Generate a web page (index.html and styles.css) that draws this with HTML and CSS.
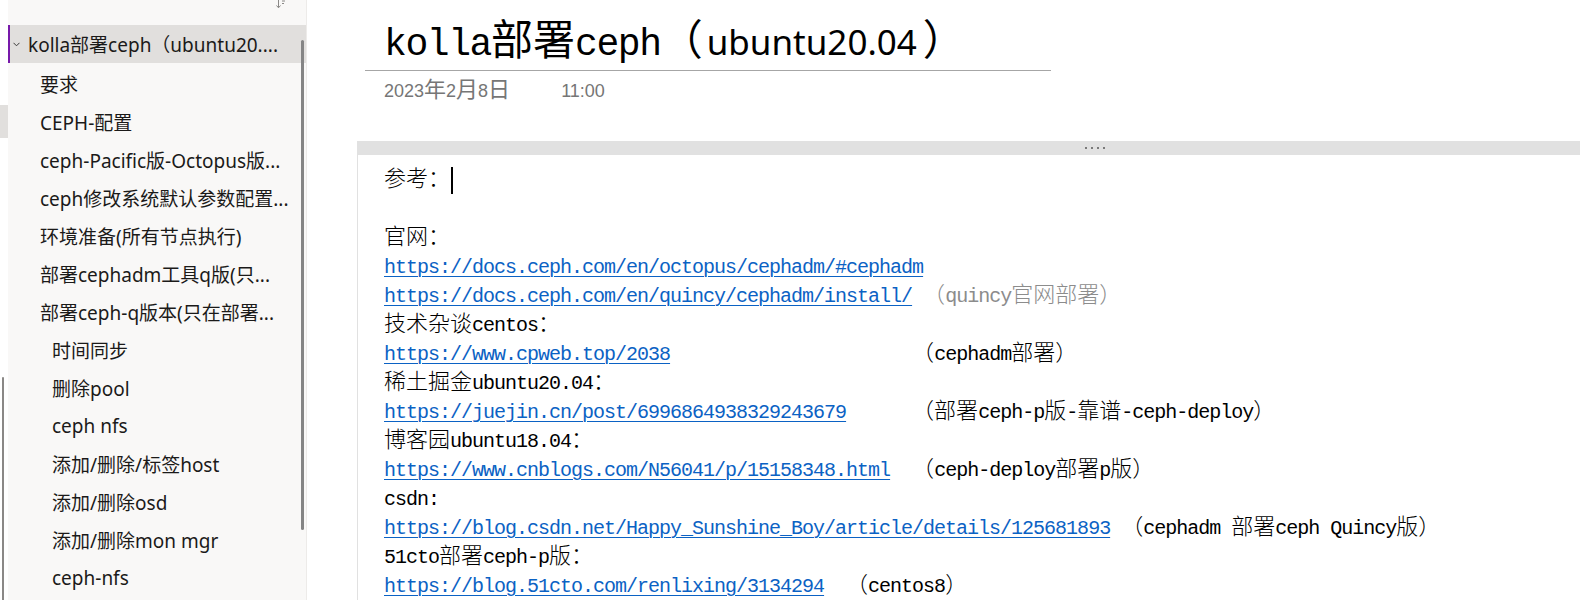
FILE: index.html
```html
<!DOCTYPE html>
<html lang="zh-CN">
<head>
<meta charset="utf-8">
<title>kolla部署ceph（ubuntu20.04）</title>
<link rel="stylesheet" href="styles.css">
</head>
<body>
<div class="app">
  <div class="sections">
    <div class="sec-sel"></div>
    <div class="sec-scroll"></div>
  </div>

  <nav class="pages">
    <div class="pages-top">
      <svg class="sort" width="12" height="12" viewBox="0 0 12 12" aria-hidden="true">
        <path d="M3.5 0 V9.5 M1.5 7.5 L3.5 9.8 L5.5 7.5" fill="none" stroke="#8a8886" stroke-width="1"/>
        <path d="M7 0.5 H11 M7 3 H10 M7 5.5 H9" fill="none" stroke="#8a8886" stroke-width="1"/>
      </svg>
    </div>
    <div class="page sel">
      <svg class="chev" width="7" height="5" viewBox="0 0 7 5" aria-hidden="true"><path d="M0.5 0.8 L3.5 3.8 L6.5 0.8" fill="none" stroke="#3b3a39" stroke-width="1"/></svg>
      <span class="pt">kolla部署ceph（ubuntu20....</span>
    </div>
    <div class="page">要求</div>
    <div class="page">CEPH-配置</div>
    <div class="page">ceph-Pacific版-Octopus版...</div>
    <div class="page">ceph修改系统默认参数配置...</div>
    <div class="page">环境准备(所有节点执行)</div>
    <div class="page">部署cephadm工具q版(只...</div>
    <div class="page">部署ceph-q版本(只在部署...</div>
    <div class="page lv2">时间同步</div>
    <div class="page lv2">删除pool</div>
    <div class="page lv2">ceph nfs</div>
    <div class="page lv2">添加/删除/标签host</div>
    <div class="page lv2">添加/删除osd</div>
    <div class="page lv2">添加/删除mon mgr</div>
    <div class="page lv2">ceph-nfs</div>
    <div class="pages-scroll"></div>
  </nav>

  <main class="canvas">
    <header class="title-block">
      <h1 class="title"><span class="tm">kolla</span>部署<span class="tm">ceph</span>（<span class="ts">ubuntu20.04</span>）</h1>
      <div class="date"><span>2023</span><span class="dc">年</span><span>2</span><span class="dc">月</span><span>8</span><span class="dc">日</span><span class="time">11:00</span></div>
    </header>

    <section class="note">
      <div class="note-bar"><i></i><i></i><i></i><i></i></div>
      <div class="note-body">
        <p>参考：<span class="caret"></span></p>
        <p> </p>
        <p>官网：</p>
        <p><a class="e">https://docs.ceph.com/en/octopus/cephadm/#cephadm</a></p>
        <p><a class="e">https://docs.ceph.com/en/quincy/cephadm/install/</a><span class="e"> </span><span class="gray">（<span class="e">quincy</span>官网部署）</span></p>
        <p>技术杂谈<span class="e">centos</span>：</p>
        <p><a class="e">https://www.cpweb.top/2038</a><span class="e">                      </span>（<span class="e">cephadm</span>部署）</p>
        <p>稀土掘金<span class="e">ubuntu20.04</span>：</p>
        <p><a class="e">https://juejin.cn/post/6996864938329243679</a><span class="e">      </span>（部署<span class="e">ceph-p</span>版<span class="e">-</span>靠谱<span class="e">-ceph-deploy</span>）</p>
        <p>博客园<span class="e">ubuntu18.04</span>：</p>
        <p><a class="e">https://www.cnblogs.com/N56041/p/15158348.html</a><span class="e">  </span>（<span class="e">ceph-deploy</span>部署<span class="e">p</span>版）</p>
        <p><span class="e">csdn:</span></p>
        <p><a class="e">https://blog.csdn.net/Happy_Sunshine_Boy/article/details/125681893</a><span class="e"> </span>（<span class="e">cephadm </span>部署<span class="e">ceph Quincy</span>版）</p>
        <p><span class="e">51cto</span>部署<span class="e">ceph-p</span>版：</p>
        <p><a class="e">https://blog.51cto.com/renlixing/3134294</a><span class="e">  </span>（<span class="e">centos8</span>）</p>
      </div>
    </section>
  </main>
</div>
</body>
</html>
```

FILE: styles.css
```css
* { box-sizing: border-box; }
html, body { margin: 0; padding: 0; background: #ffffff; }
body {
  width: 1580px;
  height: 600px;
  overflow: hidden;
  font-family: "Noto Sans", "Noto Sans CJK SC", sans-serif;
  color: #000000;
}
.app {
  display: flex;
  height: 600px;
}

/* left section strip */
.sections {
  width: 8px;
  flex: none;
  position: relative;
  background: #ffffff;
}
.sec-sel {
  position: absolute;
  left: 0;
  top: 105px;
  width: 8px;
  height: 33px;
  background: #e1dfdd;
}
.sec-scroll {
  position: absolute;
  left: 2px;
  top: 377px;
  width: 2px;
  height: 240px;
  background: #8a8886;
  border-radius: 1px;
}

/* page list */
.pages {
  width: 299px;
  flex: none;
  position: relative;
  background: #f9f8f7;
  border-right: 1px solid #edebe9;
  font-size: 19px;
  overflow: hidden;
}
.pages-top {
  height: 25px;
  display: flex;
  justify-content: flex-end;
  align-items: flex-start;
  padding-right: 19px;
}
.sort { margin-top: -2px; }
.page {
  height: 38px;
  display: flex;
  align-items: center;
  padding-left: 32px;
  white-space: nowrap;
  overflow: hidden;
  color: #1b1a19;
}
.page.lv2 { padding-left: 44px; }
.page.sel {
  background: #e1dfdd;
  border-left: 2px solid #7719aa;
  padding-left: 3px;
  margin-bottom: 2px;
}
.chev { flex: none; margin-right: 8px; margin-top: 1px; }
.pages-scroll {
  position: absolute;
  left: 293px;
  top: 40px;
  width: 3px;
  height: 490px;
  background: #858585;
  border-radius: 2px;
}

/* canvas */
.canvas {
  flex: 1;
  position: relative;
  overflow: hidden;
  background: #ffffff;
}
.title-block {
  margin-left: 58px;
  width: 686px;
}
.title {
  margin: 0;
  padding: 12px 0 8px 19px;
  height: 71px;
  border-bottom: 1px solid #a6a6a6;
  font-family: "Noto Sans CJK SC", sans-serif;
  font-weight: 400;
  font-size: 42px;
  line-height: 50px;
  white-space: nowrap;
}
.tm {
  font-family: "Liberation Mono", monospace;
  font-size: 38px;
  letter-spacing: -1.4px;
}
.ts {
  font-family: "Noto Sans", sans-serif;
  font-size: 35px;
  margin-left: 4px;
  margin-right: 6px;
}
.date {
  padding-left: 19px;
  margin-top: 5px;
  height: 22px;
  line-height: 22px;
  font-family: "Liberation Sans", sans-serif;
  font-size: 18px;
  color: #767676;
  white-space: nowrap;
}
.dc {
  font-family: "Noto Sans CJK SC", sans-serif;
  font-size: 22px;
}
.time { margin-left: 51px; }

.note {
  margin-left: 50px;
  margin-top: 43px;
  width: 1476px;
}
.note-bar {
  height: 14px;
  background: #e1e1e1;
  display: flex;
  justify-content: center;
  align-items: center;
  gap: 3.5px;
}
.note-bar i {
  display: block;
  width: 2.5px;
  height: 2.5px;
  background: #7a7a7a;
}
.note-body {
  border-left: 1px solid #e1e1e1;
  padding: 7px 0 0 26px;
  height: 460px;
  font-family: "Noto Sans CJK SC", sans-serif;
  font-weight: 300;
  font-size: 22px;
  color: #000000;
}
.note-body p {
  margin: 0;
  height: 29px;
  line-height: 29px;
  white-space: pre;
}
.e {
  font-family: "Liberation Mono", monospace;
  font-weight: 400;
  font-size: 20px;
  letter-spacing: -1px;
}
.note-body a {
  color: #0b62c4;
  text-decoration: underline;
  text-decoration-thickness: 1px;
  text-underline-offset: 3px;
}
.gray { color: #8c8c8c; }
.caret {
  display: inline-block;
  width: 2px;
  height: 27px;
  background: #000000;
  vertical-align: middle;
  margin-left: 1px;
}
```
